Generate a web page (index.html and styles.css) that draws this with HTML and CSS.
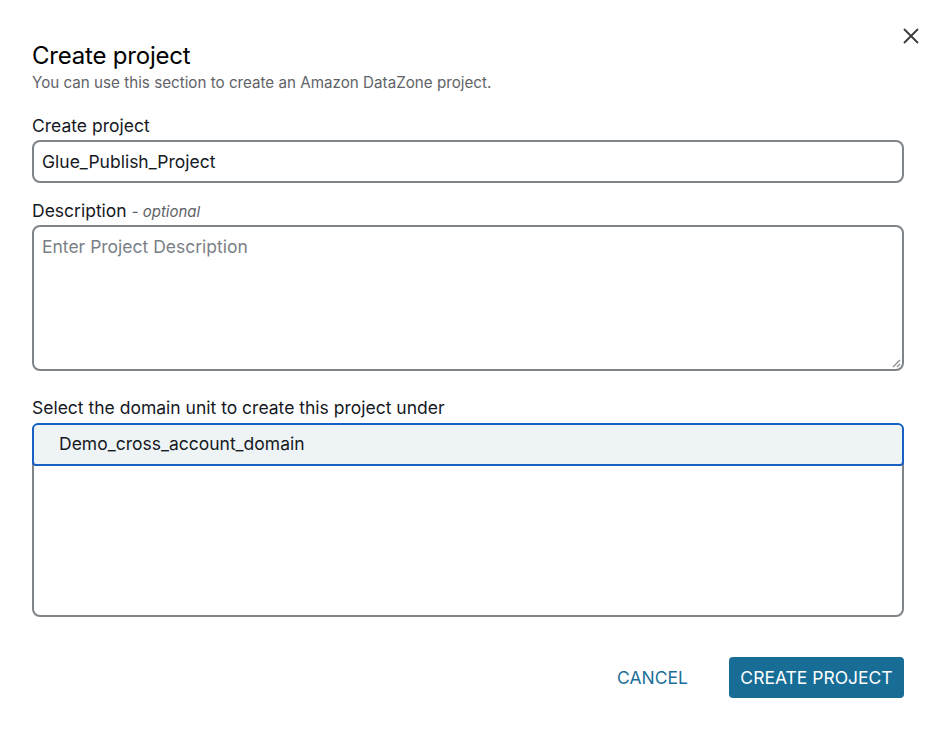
FILE: index.html
```html
<!DOCTYPE html>
<html>
<head>
<meta charset="utf-8">
<link rel="stylesheet" href="styles.css">
</head>
<body>
<div class="dialog">
  <button class="close" aria-label="Close">
    <svg width="16" height="16" viewBox="0 0 16 16"><path d="M1.5 1.5 L14.5 14.5 M14.5 1.5 L1.5 14.5" stroke="#3a3a3a" stroke-width="1.8" stroke-linecap="round" fill="none"/></svg>
  </button>
  <h1 class="title">Create project</h1>
  <p class="subtitle">You can use this section to create an Amazon DataZone project.</p>

  <div class="field name-field">
    <label class="label">Create project</label>
    <div class="input">Glue_Publish_Project</div>
  </div>

  <div class="field desc-field">
    <label class="label">Description <span class="optional">- optional</span></label>
    <div class="textarea">
      <span class="placeholder">Enter Project Description</span>
      <svg class="grip" width="12" height="12" viewBox="0 0 12 12"><path d="M11 4 L4 11 M11 8 L8 11" stroke="#8a8a8a" stroke-width="1.2" fill="none"/></svg>
    </div>
  </div>

  <div class="field domain-field">
    <label class="label">Select the domain unit to create this project under</label>
    <div class="listbox">
      <div class="option selected">Demo_cross_account_domain</div>
    </div>
  </div>

  <div class="actions">
    <button class="btn-link">CANCEL</button>
    <button class="btn-primary">CREATE PROJECT</button>
  </div>
</div>
</body>
</html>
```

FILE: styles.css
```css
* { box-sizing: border-box; }
html, body { margin: 0; padding: 0; background: #ffffff; }
body {
  font-family: Inter, "Liberation Sans", Arial, sans-serif;
  color: #16191f;
  width: 936px;
  height: 747px;
  overflow: hidden;
}
.dialog {
  position: relative;
  padding: 41px 32px 0 32px;
  width: 936px;
}
.close {
  position: absolute;
  top: 28px;
  right: 17px;
  width: 16px;
  height: 16px;
  padding: 0;
  border: none;
  background: none;
  display: flex;
}
.title {
  margin: 0;
  font-size: 24px;
  font-weight: 400;
  line-height: 30px;
  color: #000;
  letter-spacing: -0.2px;
}
.subtitle {
  margin: 2px 0 0 0;
  font-size: 15.2px;
  line-height: 20px;
  color: #5f6368;
}
.field { display: flex; flex-direction: column; }
.label {
  font-size: 17.5px;
  line-height: 22px;
  color: #16191f;
}
.optional {
  font-style: italic;
  font-size: 15px;
  color: #5f6368;
}
.name-field { margin-top: 22px; }
.name-field .label { margin-bottom: 3px; }
.input {
  height: 43px;
  border: 2px solid #7f8489;
  border-radius: 8px;
  padding: 0 8px;
  font-size: 17.5px;
  line-height: 39px;
  color: #16191f;
  width: 872px;
}
.desc-field { margin-top: 17px; }
.desc-field .label { margin-bottom: 2px; }
.textarea {
  position: relative;
  height: 146px;
  border: 2px solid #7f8489;
  border-radius: 8px;
  padding: 7px 8px;
  width: 872px;
}
.placeholder {
  font-size: 17.5px;
  line-height: 26px;
  color: #7a7f86;
}
.grip {
  position: absolute;
  right: 1px;
  bottom: 1px;
}
.domain-field { margin-top: 26px; }
.domain-field .label { margin-bottom: 4px; }
.listbox {
  height: 194px;
  border: 2px solid #7f8489;
  border-radius: 8px;
  width: 872px;
}
.option {
  height: 42px;
  font-size: 17.5px;
  line-height: 38px;
  padding-left: 25px;
}
.option.selected {
  margin: -2px -2px 0 -2px;
  height: 43px;
  border: 2px solid #1760c4;
  border-radius: 6px 6px 4px 4px;
  background: #eef4f5;
  padding-left: 25px;
}
.actions {
  display: flex;
  justify-content: flex-end;
  align-items: center;
  gap: 41px;
  margin-top: 40px;
}
.btn-link {
  border: none;
  background: none;
  font-family: inherit;
  font-size: 17.5px;
  color: #1b6f98;
  padding: 0;
}
.btn-primary {
  border: none;
  background: #176d96;
  color: #ffffff;
  font-family: inherit;
  font-size: 17.5px;
  height: 41px;
  width: 175px;
  border-radius: 4px;
  padding: 0;
}
```
